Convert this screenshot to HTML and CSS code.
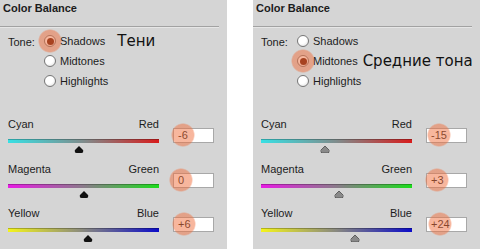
FILE: index.html
```html
<!DOCTYPE html>
<html lang="en">
<head>
    <meta charset="UTF-8">
    <title>Color Balance</title>
    <link rel="stylesheet" href="styles.css">
</head>
<body>
    <div class="page">
        <section class="panel">
            <div class="title">Color Balance</div>
            <div class="tone">
                <span class="tone-label">Tone:</span>
                <div class="options">
                    <div class="option"><span class="radio checked mark"></span><span>Shadows</span><span class="note note-wide">Тени</span></div>
                    <div class="option"><span class="radio"></span><span>Midtones</span></div>
                    <div class="option"><span class="radio"></span><span>Highlights</span></div>
                </div>
            </div>
            <div class="sliders">
                <div class="slider">
                    <div class="track-col">
                        <div class="ends"><span>Cyan</span><span>Red</span></div>
                        <div class="bar cyan-red"><svg class="thumb" style="left: 47%" viewBox="0 0 9 7"><path d="M4.5 0 L9 4.5 Q9 7 7 7 L2 7 Q0 7 0 4.5 Z"/></svg></div>
                    </div>
                    <div class="value"><span class="mark">-6</span></div>
                </div>
                <div class="slider">
                    <div class="track-col">
                        <div class="ends"><span>Magenta</span><span>Green</span></div>
                        <div class="bar magenta-green"><svg class="thumb" style="left: 50%" viewBox="0 0 9 7"><path d="M4.5 0 L9 4.5 Q9 7 7 7 L2 7 Q0 7 0 4.5 Z"/></svg></div>
                    </div>
                    <div class="value"><span class="mark">0</span></div>
                </div>
                <div class="slider">
                    <div class="track-col">
                        <div class="ends"><span>Yellow</span><span>Blue</span></div>
                        <div class="bar yellow-blue"><svg class="thumb" style="left: 53%" viewBox="0 0 9 7"><path d="M4.5 0 L9 4.5 Q9 7 7 7 L2 7 Q0 7 0 4.5 Z"/></svg></div>
                    </div>
                    <div class="value"><span class="mark">+6</span></div>
                </div>
            </div>
        </section>
        <section class="panel panel-mid">
            <div class="title">Color Balance</div>
            <div class="tone">
                <span class="tone-label">Tone:</span>
                <div class="options">
                    <div class="option"><span class="radio"></span><span>Shadows</span></div>
                    <div class="option"><span class="radio checked mark"></span><span>Midtones</span><span class="note">Средние тона</span></div>
                    <div class="option"><span class="radio"></span><span>Highlights</span></div>
                </div>
            </div>
            <div class="sliders">
                <div class="slider">
                    <div class="track-col">
                        <div class="ends"><span>Cyan</span><span>Red</span></div>
                        <div class="bar cyan-red"><svg class="thumb" style="left: 42.5%" viewBox="0 0 9 7"><path d="M4.5 0 L9 4.5 Q9 7 7 7 L2 7 Q0 7 0 4.5 Z"/></svg></div>
                    </div>
                    <div class="value"><span class="mark">-15</span></div>
                </div>
                <div class="slider">
                    <div class="track-col">
                        <div class="ends"><span>Magenta</span><span>Green</span></div>
                        <div class="bar magenta-green"><svg class="thumb" style="left: 51.5%" viewBox="0 0 9 7"><path d="M4.5 0 L9 4.5 Q9 7 7 7 L2 7 Q0 7 0 4.5 Z"/></svg></div>
                    </div>
                    <div class="value"><span class="mark">+3</span></div>
                </div>
                <div class="slider">
                    <div class="track-col">
                        <div class="ends"><span>Yellow</span><span>Blue</span></div>
                        <div class="bar yellow-blue"><svg class="thumb" style="left: 62%" viewBox="0 0 9 7"><path d="M4.5 0 L9 4.5 Q9 7 7 7 L2 7 Q0 7 0 4.5 Z"/></svg></div>
                    </div>
                    <div class="value"><span class="mark">+24</span></div>
                </div>
            </div>
        </section>
    </div>
</body>
</html>
```
FILE: styles.css
```css
body {
    margin: 0;
    background-color: #ffffff;
    font-family: "Liberation Sans", Arial, sans-serif;
    font-size: 11px;
    color: #1c1c1c;
}
.page {
    display: flex;
    gap: 26px;
    height: 249px;
}
.panel {
    width: 227px;
    background-color: #d5d5d5;
}
.title {
    box-sizing: border-box;
    width: 219px;
    height: 27px;
    padding: 2px 0 0 3px;
    line-height: 13px;
    font-weight: bold;
    border-bottom: 1px solid #a2a2a2;
    box-shadow: 0 1px 0 #e6e6e6;
}
.tone {
    display: flex;
    margin-top: 4px;
    padding-left: 8px;
}
.tone-label {
    width: 36px;
    line-height: 20px;
    margin-top: 1px;
}
.option {
    display: flex;
    align-items: center;
    height: 20px;
}
.radio {
    position: relative;
    box-sizing: border-box;
    width: 12px;
    height: 12px;
    margin-right: 4px;
    border: 1px solid #777;
    border-radius: 50%;
    background: radial-gradient(circle at 40% 35%, #ffffff 45%, #d8d8d8);
}
.radio.checked::before {
    content: "";
    position: absolute;
    inset: 1.5px;
    border-radius: 50%;
    background-color: #5e1604;
}
.note {
    margin-left: 12px;
    font-family: "DejaVu Sans", sans-serif;
    font-size: 15px;
    color: #111;
}
.panel-mid .note {
    margin-left: 5px;
}
.mark {
    position: relative;
}
.mark::after {
    content: "";
    position: absolute;
    left: 50%;
    top: 50%;
    width: 24px;
    height: 24px;
    margin: -12px 0 0 -12px;
    border-radius: 50%;
    background: radial-gradient(circle, rgba(240, 110, 60, 0.5) 62%, rgba(240, 110, 60, 0) 72%);
}
.sliders {
    margin-top: 27px;
    padding-left: 8px;
}
.slider {
    display: flex;
    height: 44.5px;
}
.track-col {
    width: 151px;
}
.ends {
    display: flex;
    justify-content: space-between;
    line-height: 13px;
}
.bar {
    position: relative;
    height: 4px;
    margin-top: 8px;
    box-shadow: inset 0 1px 0 rgba(0, 0, 0, 0.25);
}
.cyan-red {
    background: linear-gradient(to right, #38e0e4, #7f8c8c 50%, #d81c1c);
}
.magenta-green {
    background: linear-gradient(to right, #e81ce4, #8a7a8a 50%, #1cdc1c);
}
.yellow-blue {
    background: linear-gradient(to right, #f4f41c, #888880 50%, #0c0cc8);
}
.thumb {
    position: absolute;
    top: 7px;
    width: 9px;
    height: 7px;
    transform: translateX(-50%);
    fill: #111;
}
.panel-mid .thumb {
    fill: #8a8a8a;
    stroke: #4a4a4a;
    stroke-width: 0.8;
}
.value {
    box-sizing: border-box;
    width: 41px;
    height: 15px;
    margin: 10px 0 0 14px;
    padding-left: 4px;
    line-height: 13px;
    background-color: #ffffff;
    border: 1px solid #a8a8a8;
}
```
